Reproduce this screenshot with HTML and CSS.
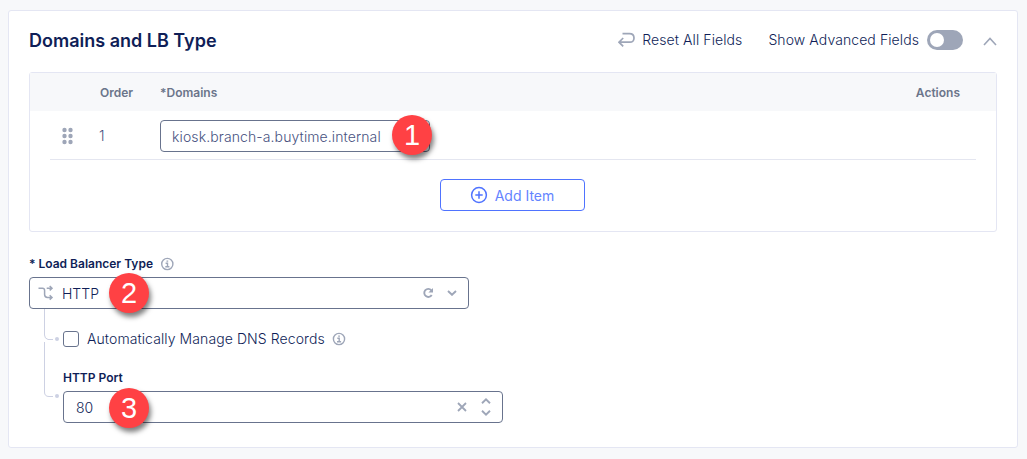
FILE: index.html
```
<!DOCTYPE html>
<html lang="en">
<head>
<meta charset="utf-8">
<title>Domains and LB Type</title>
<link rel="stylesheet" href="styles.css">
</head>
<body>
<section class="card">
  <header class="card-header">
    <h2 class="title">Domains and LB Type</h2>
    <div class="reset">
      <svg class="icon" width="17" height="16" viewBox="0 0 17 16" stroke-width="1.7"><path d="M4.5 1.6H11.5Q16 1.6 16 6T11.5 10.2H1.2M5.2 6L1 10.2L5.2 14.4"/></svg>
      <span class="reset-label">Reset All Fields</span>
    </div>
    <span class="advanced-label">Show Advanced Fields</span>
    <span class="toggle"><span class="knob"></span></span>
    <svg class="icon collapse" width="14" height="9" viewBox="0 0 14 9" stroke-width="1.6"><path d="M1 8L7 1.5L13 8"/></svg>
  </header>

  <div class="table">
    <div class="table-head">
      <span class="col-order">Order</span>
      <span class="col-domains">*Domains</span>
      <span class="col-actions">Actions</span>
    </div>
    <div class="table-row">
      <svg class="grip" width="12" height="18" viewBox="0 0 12 18"><circle cx="2.5" cy="3" r="2.2"/><circle cx="8.5" cy="3" r="2.2"/><circle cx="2.5" cy="9" r="2.2"/><circle cx="8.5" cy="9" r="2.2"/><circle cx="2.5" cy="15" r="2.2"/><circle cx="8.5" cy="15" r="2.2"/></svg>
      <span class="order">1</span>
      <div class="field domain"><span class="domain-value">kiosk.branch-a.buytime.internal</span><span class="callout callout-one">1</span></div>
    </div>
    <div class="add-row">
      <button class="add">
        <svg class="icon-add" width="18" height="18" viewBox="0 0 18 18"><circle cx="9" cy="9" r="7.4"/><path d="M9 5.3V12.7M5.3 9H12.7"/></svg>
        <span class="add-label">Add Item</span>
      </button>
    </div>
  </div>

  <div class="label-line">
    <span class="label lb-label">* Load Balancer Type</span>
    <svg class="icon" width="14" height="14" viewBox="0 0 14 14" stroke-width="1.4"><circle cx="7.3" cy="7" r="5.6"/><path d="M5.6 6.3H7.5V9.8M5.3 9.8H9.4M6.5 4.1H8.2"/></svg>
  </div>
  <div class="field lb-type">
    <svg class="icon" width="16" height="16" viewBox="0 0 16 16" stroke-width="1.5"><path d="M0.5 3.2H4.5Q6.6 3.2 6.6 5.4V9.5Q6.6 12.4 9.5 12.4H14M8.7 3.2H14M11.7 1L14 3.2L11.7 5.4M11.7 10.2L14 12.4L11.7 14.6"/></svg>
    <span class="lb-value">HTTP</span>
    <svg class="icon reload" width="12" height="12" viewBox="0 0 12 12" stroke-width="1.9"><path d="M9.3 3.3A4 4 0 1 0 9.7 8"/><path d="M11 1V5.5H6.4Z" fill="#9ea6b8" stroke="none"/></svg>
    <svg class="icon" width="10" height="6" viewBox="0 0 10 6" stroke-width="1.9"><path d="M1 1L5 4.8L9 1"/></svg>
    <span class="callout callout-two">2</span>
  </div>

  <div class="nested">
    <div class="tree">
      <svg width="18" height="92" viewBox="0 0 18 92"><path d="M1.5 0V26Q1.5 29.5 5 30.5H10M1.5 33V83Q1.5 87.5 6 87.5H10" fill="none" stroke="#cdd1e3"/><circle cx="14" cy="30" r="2" fill="#cdd1e3"/><circle cx="14" cy="87" r="2" fill="#cdd1e3"/></svg>
    </div>
    <div class="nested-fields">
      <div class="check-line">
        <span class="checkbox"></span>
        <span class="check-label">Automatically Manage DNS Records</span>
        <svg class="icon" width="14" height="14" viewBox="0 0 14 14" stroke-width="1.4"><circle cx="7" cy="7" r="5.6"/><path d="M5.3 6.3H7.2V9.8M5 9.8H9.1M6.2 4.1H7.9"/></svg>
      </div>
      <div class="port-line"><span class="label port-label">HTTP Port</span></div>
      <div class="field port">
        <span class="port-value">80</span>
        <svg class="icon clear" width="10" height="10" viewBox="0 0 10 10" stroke-width="1.8"><path d="M1 1L9 9M9 1L1 9"/></svg>
        <svg class="icon" width="10" height="18" viewBox="0 0 10 18" stroke-width="1.9"><path d="M1 5.2L5 1.4L9 5.2M1 12.8L5 16.6L9 12.8"/></svg>
        <span class="callout callout-three">3</span>
      </div>
    </div>
  </div>
</section>
</body>
</html>
```

FILE: styles.css
```
* { box-sizing: border-box; }

body {
  margin: 0;
  padding: 10px 9px 11px 8px;
  background: #f7f8fa;
  color: #0f1e57;
  font-family: Inter, "Liberation Sans", sans-serif;
  font-size: 14px;
  font-weight: 350;
}

.card {
  height: 438px;
  padding: 0 20px;
  background: #fff;
  border: 1px solid #e4e6f3;
  border-radius: 3px;
}

.card-header {
  display: flex;
  align-items: center;
  height: 61px;
  padding-bottom: 3px;
}

.title {
  margin: 0 auto 0 0;
  font-size: 18px;
  font-weight: 600;
}

.icon {
  flex: none;
  fill: none;
  stroke: #9ea6b8;
}

.reset {
  display: flex;
  align-items: center;
  gap: 7px;
  margin-right: 26px;
}

.reset-label,
.advanced-label {
  padding-bottom: 1px;
  letter-spacing: 0.09px;
}

.toggle {
  width: 36px;
  height: 20px;
  margin: 0 20px 0 8px;
  padding: 3px;
  background: #9ea6b8;
  border-radius: 10px;
}

.knob {
  display: block;
  width: 14px;
  height: 14px;
  background: #fff;
  border-radius: 50%;
}

.collapse { margin-top: 3px; }

.table {
  height: 160px;
  border: 1px solid #e4e6f3;
  border-radius: 3px;
}

.table-head {
  display: flex;
  align-items: center;
  height: 38px;
  padding: 0 36px 0 70px;
  background: #f7f8fa;
  color: #6b758a;
  font-size: 12px;
  font-weight: 600;
}

.col-order { width: 60px; }

.col-actions { margin-left: auto; }

.table-row {
  display: flex;
  align-items: center;
  height: 49px;
  margin: 0 20px;
  padding: 1px 0 0 12px;
  border-bottom: 1px solid #e4e6f0;
}

.grip { fill: #9ea6b8; }

.order {
  width: 61px;
  margin-left: 25px;
  color: #48527f;
}

.field {
  position: relative;
  display: flex;
  align-items: center;
  height: 32px;
  border: 1px solid #68738d;
  border-radius: 4px;
}

.domain {
  width: 270px;
  padding: 1px 11px 0;
  color: #48527f;
  letter-spacing: 0.11px;
}

.add-row {
  display: flex;
  justify-content: center;
  padding: 19px 2px 0 0;
}

.add {
  display: flex;
  align-items: center;
  justify-content: center;
  gap: 7px;
  width: 145px;
  height: 32px;
  padding: 0;
  background: #fff;
  border: 1px solid #4f73ff;
  border-radius: 4px;
  color: #6484ff;
  font: inherit;
  font-weight: 400;
}

.icon-add {
  fill: none;
  stroke: #4f73ff;
  stroke-width: 1.5;
}

.label-line {
  display: flex;
  align-items: center;
  gap: 7px;
  height: 45px;
  padding-top: 18px;
}

.label {
  font-size: 12px;
  font-weight: 600;
}

.lb-label { margin-top: -1px; }

.lb-type {
  width: 440px;
  padding: 0 11px 0 8px;
}

.lb-value {
  margin: 1px auto 0 8px;
}

.reload { margin-right: 13px; }

.nested { display: flex; }

.tree {
  width: 34px;
  padding-left: 14px;
}

.check-line {
  display: flex;
  align-items: center;
  height: 60px;
}

.checkbox {
  width: 16px;
  height: 16px;
  border: 1px solid #68738d;
  border-radius: 3px;
}

.check-label {
  margin: 0 7px 0 8px;
  padding-bottom: 1px;
  letter-spacing: 0.09px;
}

.port-line {
  height: 22px;
  line-height: 15px;
}

.port {
  width: 440px;
  padding: 0 11px 0 12px;
}

.port-value {
  margin: 1px auto 0 0;
}

.clear { margin-right: 14px; }

.callout {
  position: absolute;
  width: 40px;
  height: 40px;
  border-radius: 50%;
  background: #ff4144;
  box-shadow: 2px 4px 5px rgba(0, 0, 0, 0.5);
  color: #fff;
  font: 29px/41px "Liberation Sans", Arial, sans-serif;
  letter-spacing: 0;
  text-align: center;
}

.callout-one { left: 231px; top: -6px; }

.callout-two { left: 79px; top: -5px; }

.callout-three { left: 45px; top: -4px; }
```
